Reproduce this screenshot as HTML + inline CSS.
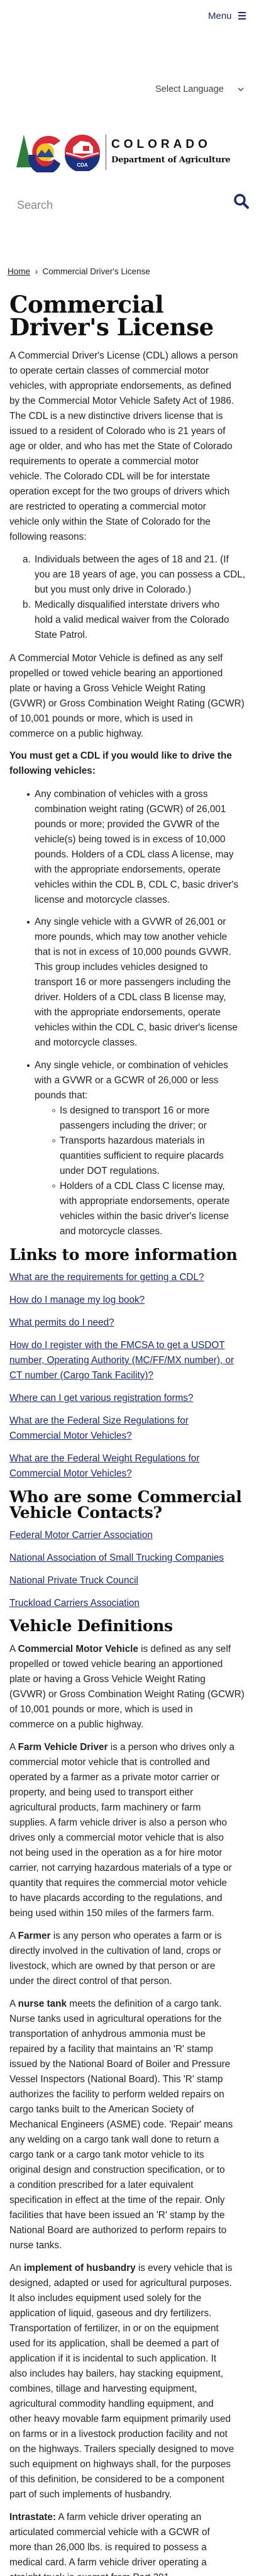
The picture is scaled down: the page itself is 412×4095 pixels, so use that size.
<!DOCTYPE html>
<html><head><meta charset="utf-8">
<style>
*{margin:0;padding:0;box-sizing:border-box}
html,body{width:412px;height:4095px;overflow:hidden;background:#fff}
body{position:relative;font-family:"Liberation Sans",Arial,sans-serif;color:#222;font-size:15.3px;line-height:24px}
.a{position:absolute;left:15px;white-space:nowrap}
.li{left:55px}
.sub{left:95px}
.dot{position:absolute;left:-12px;top:10px;width:4px;height:4px;background:#222;border-radius:50%}
.circ{position:absolute;left:-12px;top:9px;width:5px;height:5px;border:1px solid #555;border-radius:50%}
.mk{position:absolute;left:-19px}
a{color:#1b2a6b;text-decoration:underline}
h1,h2{font-family:"DejaVu Serif","Liberation Serif",serif;font-weight:bold;color:#111}
h2{font-size:25px;letter-spacing:-0.3px}
b{font-weight:bold}
</style></head><body>

<div class="a" style="left:331px;top:14px;color:#1b2a6b;font-size:15px">Menu</div>
<div style="position:absolute;left:379px;top:19px;width:12px;height:12px">
<div style="height:2px;background:#1b2a6b;margin-bottom:3px"></div><div style="height:2px;background:#1b2a6b;margin-bottom:3px"></div><div style="height:2px;background:#1b2a6b"></div></div>

<div class="a" style="left:247px;top:130px;color:#444;font-size:14.5px">Select Language</div>
<svg style="position:absolute;left:378px;top:138px" width="10" height="8"><path d="M1 2 L5 6 L9 2" stroke="#444" stroke-width="1.5" fill="none"/></svg>

<svg style="position:absolute;left:24px;top:210px" width="80" height="64" viewBox="0 0 80 64">
<polygon points="14,4 26,56 2,56" fill="#2e7d3a"/>
<path d="M72,14 A26,26 0 1 0 72,50 L62,43 A14,14 0 1 1 62,21 Z" fill="#d52b3a"/>
<path d="M22,36 A26,26 0 0 0 72,50 L62,43 A14,14 0 0 1 33,36 Z" fill="#1d3080"/>
<circle cx="48" cy="32" r="14" fill="#f6c322"/>
<polygon points="34,40 42,28 48,34 54,26 62,40" fill="#2c4a8a"/>
</svg>
<svg style="position:absolute;left:102px;top:212px" width="58" height="60" viewBox="0 0 58 60">
<circle cx="29" cy="30" r="28" fill="#d52b3a"/>
<path d="M1,34 L29,42 L57,34 A28,28 0 0 1 1,34 Z" fill="#1d3080"/>
<path d="M3,31 L29,38 L55,31" stroke="#fff" stroke-width="2" fill="none"/>
<polygon points="14,22 26,12 40,14 46,22 46,32 14,32" fill="#fff"/>
<rect x="30" y="20" width="10" height="8" fill="#d52b3a"/>
<text x="29" y="53" font-family="Liberation Sans" font-weight="bold" font-size="8" fill="#fff" text-anchor="middle">CDA</text>
</svg>
<div style="position:absolute;left:168px;top:214px;width:1px;height:56px;background:#555"></div>
<div class="a" style="left:177px;top:218px;font-size:19px;line-height:24px;font-weight:bold;letter-spacing:6px;color:#111">COLORADO</div>
<div class="a" style="left:177px;top:246px;font-family:'DejaVu Serif',serif;font-size:13px;line-height:18px;font-weight:bold;color:#111;letter-spacing:-0.2px">Department of Agriculture</div>

<div class="a" style="left:27px;top:312px;font-size:18px;line-height:28px;color:#888">Search</div>
<svg style="position:absolute;left:371px;top:307px" width="26" height="26" viewBox="0 0 26 26"><circle cx="10.5" cy="10.5" r="7.5" stroke="#1b2a6b" stroke-width="3.5" fill="none"/><path d="M16 16 L23 23" stroke="#1b2a6b" stroke-width="4" stroke-linecap="round"/></svg>

<div class="a" style="left:12px;top:422px;font-size:13.5px;line-height:20px;color:#222"><span style="text-decoration:underline">Home</span> &nbsp;›&nbsp; Commercial Driver's License</div>

<h1 class="a" style="top:466px;font-size:37px;line-height:36px;letter-spacing:-0.5px">Commercial<br>Driver's License</h1>

<div class="a" style="top:554px">A Commercial Driver's License (CDL) allows a person<br>to operate certain classes of commercial motor<br>vehicles, with appropriate endorsements, as defined<br>by the Commercial Motor Vehicle Safety Act of 1986.<br>The CDL is a new distinctive drivers license that is<br>issued to a resident of Colorado who is 21 years of<br>age or older, and who has met the State of Colorado<br>requirements to operate a commercial motor<br>vehicle. The Colorado CDL will be for interstate<br>operation except for the two groups of drivers which<br>are restricted to operating a commercial motor<br>vehicle only within the State of Colorado for the<br>following reasons:</div>

<div class="a li" style="top:878px"><span class="mk">a.</span>Individuals between the ages of 18 and 21. (If<br>you are 18 years of age, you can possess a CDL,<br>but you must only drive in Colorado.)</div>
<div class="a li" style="top:950px"><span class="mk">b.</span>Medically disqualified interstate drivers who<br>hold a valid medical waiver from the Colorado<br>State Patrol.</div>

<div class="a" style="top:1035px">A Commercial Motor Vehicle is defined as any self<br>propelled or towed vehicle bearing an apportioned<br>plate or having a Gross Vehicle Weight Rating<br>(GVWR) or Gross Combination Weight Rating (GCWR)<br>of 10,001 pounds or more, which is used in<br>commerce on a public highway.</div>

<div class="a" style="top:1190px;font-weight:bold">You must get a CDL if you would like to drive the<br>following vehicles:</div>

<div class="a li" style="top:1251px"><span class="dot"></span>Any combination of vehicles with a gross<br>combination weight rating (GCWR) of 26,001<br>pounds or more; provided the GVWR of the<br>vehicle(s) being towed is in excess of 10,000<br>pounds. Holders of a CDL class A license, may<br>with the appropriate endorsements, operate<br>vehicles within the CDL B, CDL C, basic driver's<br>license and motorcycle classes.</div>
<div class="a li" style="top:1454px"><span class="dot"></span>Any single vehicle with a GVWR of 26,001 or<br>more pounds, which may tow another vehicle<br>that is not in excess of 10,000 pounds GVWR.<br>This group includes vehicles designed to<br>transport 16 or more passengers including the<br>driver. Holders of a CDL class B license may,<br>with the appropriate endorsements, operate<br>vehicles within the CDL C, basic driver's license<br>and motorcycle classes.</div>
<div class="a li" style="top:1682px"><span class="dot"></span>Any single vehicle, or combination of vehicles<br>with a GVWR or a GCWR of 26,000 or less<br>pounds that:</div>
<div class="a sub" style="top:1754px"><span class="circ"></span>Is designed to transport 16 or more<br>passengers including the driver; or</div>
<div class="a sub" style="top:1802px"><span class="circ"></span>Transports hazardous materials in<br>quantities sufficient to require placards<br>under DOT regulations.</div>
<div class="a sub" style="top:1874px"><span class="circ"></span>Holders of a CDL Class C license may,<br>with appropriate endorsements, operate<br>vehicles within the basic driver's license<br>and motorcycle classes.</div>

<h2 class="a" style="top:1980px;line-height:30px">Links to more information</h2>
<div class="a" style="top:2019px"><a>What are the requirements for getting a CDL?</a></div>
<div class="a" style="top:2055px"><a>How do I manage my log book?</a></div>
<div class="a" style="top:2091px"><a>What permits do I need?</a></div>
<div class="a" style="top:2127px"><a>How do I register with the FMCSA to get a USDOT<br>number, Operating Authority (MC/FF/MX number), or<br>CT number (Cargo Tank Facility)?</a></div>
<div class="a" style="top:2211px"><a>Where can I get various registration forms?</a></div>
<div class="a" style="top:2247px"><a>What are the Federal Size Regulations for<br>Commercial Motor Vehicles?</a></div>
<div class="a" style="top:2307px"><a>What are the Federal Weight Regulations for<br>Commercial Motor Vehicles?</a></div>

<h2 class="a" style="top:2367px;line-height:25px">Who are some Commercial<br>Vehicle Contacts?</h2>
<div class="a" style="top:2429px"><a>Federal Motor Carrier Association</a></div>
<div class="a" style="top:2465px"><a>National Association of Small Trucking Companies</a></div>
<div class="a" style="top:2501px"><a>National Private Truck Council</a></div>
<div class="a" style="top:2537px"><a>Truckload Carriers Association</a></div>

<h2 class="a" style="top:2570px;line-height:30px">Vehicle Definitions</h2>
<div class="a" style="top:2610px">A <b>Commercial Motor Vehicle</b> is defined as any self<br>propelled or towed vehicle bearing an apportioned<br>plate or having a Gross Vehicle Weight Rating<br>(GVWR) or Gross Combination Weight Rating (GCWR)<br>of 10,001 pounds or more, which is used in<br>commerce on a public highway.</div>
<div class="a" style="top:2766px">A <b>Farm Vehicle Driver</b> is a person who drives only a<br>commercial motor vehicle that is controlled and<br>operated by a farmer as a private motor carrier or<br>property, and being used to transport either<br>agricultural products, farm machinery or farm<br>supplies. A farm vehicle driver is also a person who<br>drives only a commercial motor vehicle that is also<br>not being used in the operation as a for hire motor<br>carrier, not carrying hazardous materials of a type or<br>quantity that requires the commercial motor vehicle<br>to have placards according to the regulations, and<br>being used within 150 miles of the farmers farm.</div>
<div class="a" style="top:3066px">A <b>Farmer</b> is any person who operates a farm or is<br>directly involved in the cultivation of land, crops or<br>livestock, which are owned by that person or are<br>under the direct control of that person.</div>
<div class="a" style="top:3174px">A <b>nurse tank</b> meets the definition of a cargo tank.<br>Nurse tanks used in agricultural operations for the<br>transportation of anhydrous ammonia must be<br>repaired by a facility that maintains an 'R' stamp<br>issued by the National Board of Boiler and Pressure<br>Vessel Inspectors (National Board). This 'R' stamp<br>authorizes the facility to perform welded repairs on<br>cargo tanks built to the American Society of<br>Mechanical Engineers (ASME) code. 'Repair' means<br>any welding on a cargo tank wall done to return a<br>cargo tank or a cargo tank motor vehicle to its<br>original design and construction specification, or to<br>a condition prescribed for a later equivalent<br>specification in effect at the time of the repair. Only<br>facilities that have been issued an 'R' stamp by the<br>National Board are authorized to perform repairs to<br>nurse tanks.</div>
<div class="a" style="top:3594px">An <b>implement of husbandry</b> is every vehicle that is<br>designed, adapted or used for agricultural purposes.<br>It also includes equipment used solely for the<br>application of liquid, gaseous and dry fertilizers.<br>Transportation of fertilizer, in or on the equipment<br>used for its application, shall be deemed a part of<br>application if it is incidental to such application. It<br>also includes hay bailers, hay stacking equipment,<br>combines, tillage and harvesting equipment,<br>agricultural commodity handling equipment, and<br>other heavy movable farm equipment primarily used<br>on farms or in a livestock production facility and not<br>on the highways. Trailers specially designed to move<br>such equipment on highways shall, for the purposes<br>of this definition, be considered to be a component<br>part of such implements of husbandry.</div>
<div class="a" style="top:3990px"><b>Intrastate:</b> A farm vehicle driver operating an<br>articulated commercial vehicle with a GCWR of<br>more than 26,000 lbs. is required to possess a<br>medical card. A farm vehicle driver operating a<br>straight truck is exempt from Part 391</div>

</body></html>
